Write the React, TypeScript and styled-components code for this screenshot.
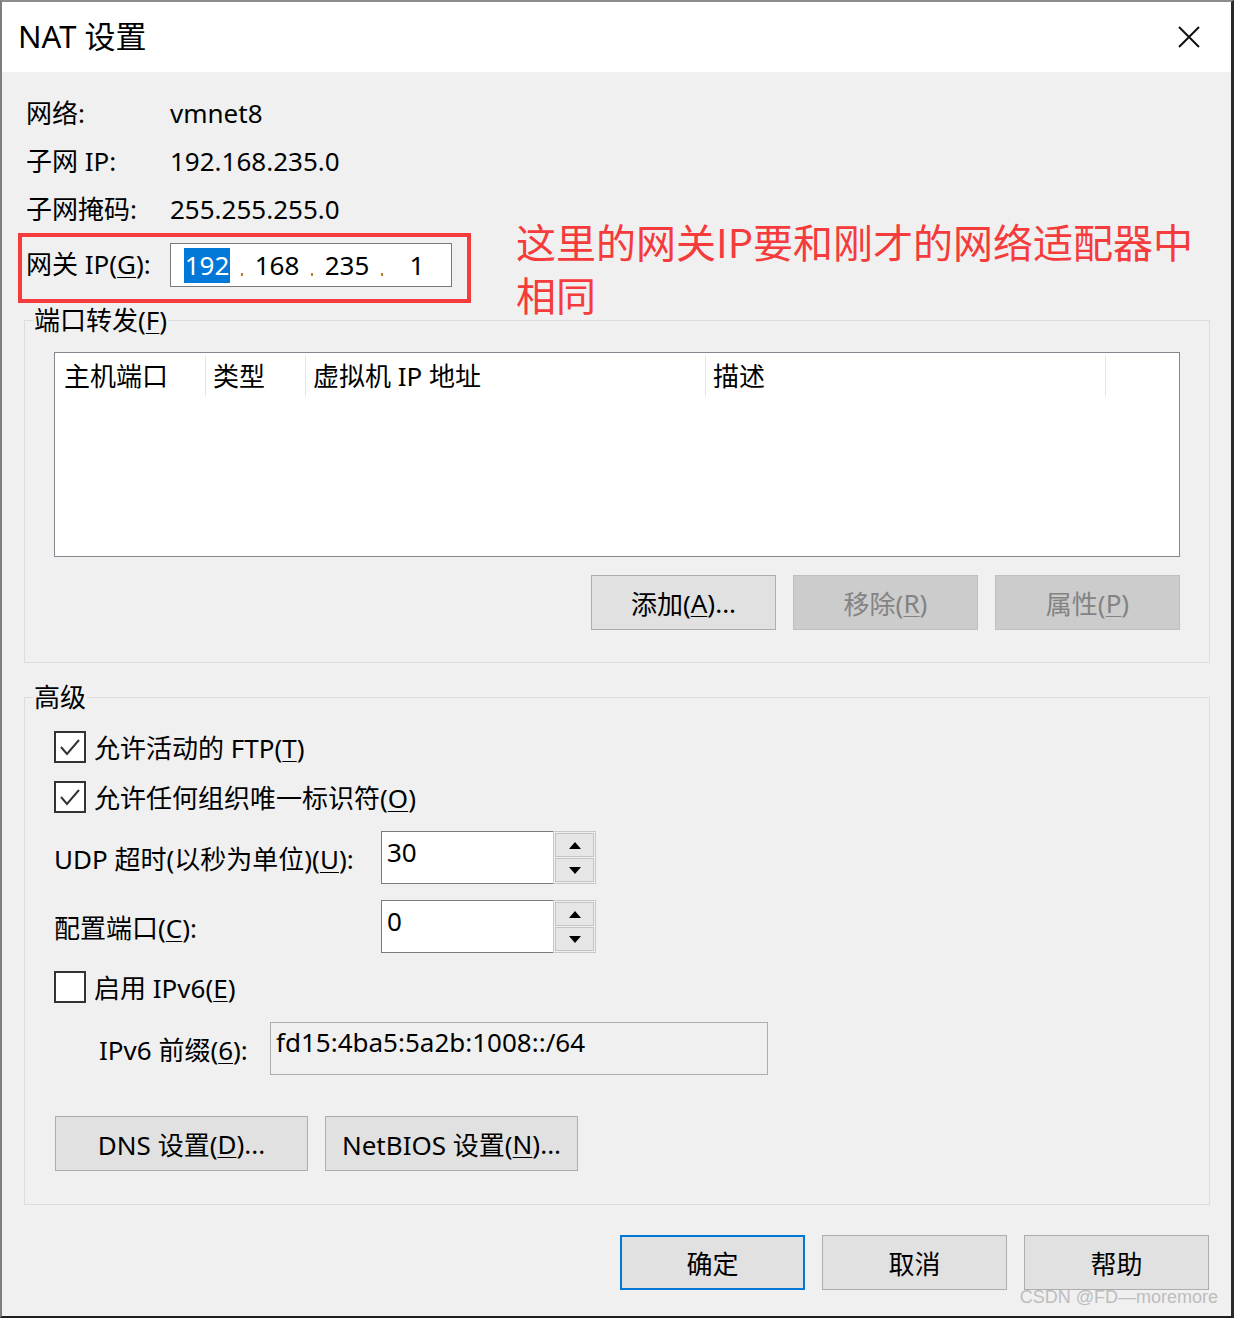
import React from 'react'
import styled, { createGlobalStyle } from 'styled-components'

const GlobalStyle = createGlobalStyle`
  html, body {
    margin: 0;
    padding: 0;
    background: #f0f0f0;
  }
  body {
    font-family: "Noto Sans", "Noto Sans CJK SC", sans-serif;
    color: #000;
  }
  * {
    box-sizing: border-box;
  }
`

const Window = styled.div`
  position: relative;
  width: 1234px;
  height: 1318px;
  display: flex;
  flex-direction: column;
  background: #f0f0f0;
  border-top: 2px solid #8c8c8c;
  border-left: 2px solid #7d7d7d;
  border-right: 3px solid #2a2a2a;
  border-bottom: 2px solid #1e1e1e;
`

const TitleBar = styled.div`
  flex: none;
  height: 70px;
  background: #fff;
  display: flex;
  align-items: center;
  justify-content: space-between;
  padding: 0 31px 0 16px;
`

const Title = styled.div`
  font-size: 31px;
  line-height: 1;
  margin-top: -2px;
`

const Body = styled.div`
  flex: 1;
  display: flex;
  flex-direction: column;
  padding: 17px 21px 0 22px;
  font-size: 26px;
`

const InfoRow = styled.div`
  display: grid;
  grid-template-columns: 144px auto;
  align-items: center;
  height: 48px;
  padding-left: 2px;
  line-height: 48px;
`

const GatewayBox = styled.div`
  width: 453px;
  height: 70px;
  margin-left: -6px;
  border: 4px solid #f53b3b;
  display: flex;
  align-items: flex-start;
  padding: 6px 0 0 4px;
`

const GatewayLabel = styled.div`
  width: 144px;
  line-height: 42px;
`

const IpInput = styled.div`
  width: 282px;
  height: 44px;
  background: #fff;
  border: 1px solid #7a7a7a;
  display: flex;
  align-items: center;
  padding-left: 4px;
`

const Octet = styled.div`
  width: 64px;
  text-align: center;
  line-height: 35px;
`

const Selected = styled.span`
  background: #0078d7;
  color: #fff;
  padding: 0 1px;
  display: inline-block;
`

const IpDot = styled.div`
  width: 6px;
  height: 35px;
  display: flex;
  align-items: flex-end;
  justify-content: center;
  padding-bottom: 7px;
  &::before {
    content: '';
    width: 2px;
    height: 3px;
    background: #c07a2a;
  }
`

const Annotation = styled.div`
  position: absolute;
  left: 514px;
  top: 213px;
  color: #f53b3b;
  font-family: "Noto Sans CJK SC", sans-serif;
  font-size: 40px;
  line-height: 53px;
  white-space: nowrap;
`

const GroupBox = styled.fieldset<{ $gap: number }>`
  margin: ${p => p.$gap}px 0 0 0;
  padding: 0;
  min-width: 0;
  border: 1px solid #dcdcdc;
`

const Legend = styled.legend`
  padding: 0 1px;
  margin-left: 8px;
  line-height: 30px;
`

const GroupInner = styled.div<{ $top: number; $bottom: number }>`
  padding: ${p => p.$top}px 29px ${p => p.$bottom}px 29px;
`

const ListView = styled.div`
  height: 205px;
  background: #fff;
  border: 1px solid #828790;
`

const ListHeader = styled.div`
  display: flex;
  align-items: flex-start;
  padding-top: 3px;
`

const HeaderCell = styled.div<{ $w: number; $pad: number }>`
  width: ${p => p.$w}px;
  padding-left: ${p => p.$pad}px;
  line-height: 40px;
  height: 40px;
  white-space: nowrap;
`

const HeaderSep = styled.div`
  width: 1px;
  height: 40px;
  background: #e5e5e5;
`

const ButtonRow = styled.div<{ $top: number; $end?: boolean }>`
  display: flex;
  gap: 17px;
  margin-top: ${p => p.$top}px;
  justify-content: ${p => (p.$end ? 'flex-end' : 'flex-start')};
`

const Button = styled.div<{ $w: number; $disabled?: boolean; $default?: boolean }>`
  width: ${p => p.$w}px;
  height: 55px;
  display: flex;
  align-items: center;
  justify-content: center;
  background: ${p => (p.$disabled ? '#cccccc' : '#e1e1e1')};
  color: ${p => (p.$disabled ? '#838383' : '#000')};
  border: ${p => (p.$default ? '2px solid #0078d7' : p.$disabled ? '1px solid #bfbfbf' : '1px solid #adadad')};
  white-space: nowrap;
`

const U = styled.span`
  text-decoration: underline;
  text-decoration-thickness: 1px;
  text-underline-offset: 3px;
`

const CheckRow = styled.div<{ $top: number }>`
  display: flex;
  align-items: center;
  gap: 8px;
  height: 32px;
  margin-top: ${p => p.$top}px;
`

const CheckBox = styled.div`
  width: 32px;
  height: 32px;
  background: #fff;
  border: 2px solid #333;
  display: flex;
  align-items: center;
  justify-content: center;
`

const SpinRow = styled.div<{ $top: number }>`
  display: grid;
  grid-template-columns: 327px auto;
  align-items: center;
  height: 53px;
  margin-top: ${p => p.$top}px;
`

const Spin = styled.div`
  display: flex;
  height: 53px;
`

const SpinField = styled.div`
  width: 172px;
  height: 53px;
  background: #fff;
  border: 1px solid #7a7a7a;
  border-right: none;
  padding-left: 5px;
  line-height: 40px;
`

const SpinButtons = styled.div`
  width: 43px;
  height: 53px;
  border: 1px solid #c8c8c8;
  padding: 1px;
  display: flex;
  flex-direction: column;
  gap: 1px;
`

const SpinButton = styled.div`
  flex: 1;
  background: #e6e6e6;
  border: 1px solid #c4c4c4;
  display: flex;
  align-items: center;
  justify-content: center;
`

const PrefixRow = styled.div`
  display: flex;
  align-items: center;
  margin-top: 19px;
  padding-left: 45px;
`

const PrefixLabel = styled.div`
  width: 171px;
  white-space: nowrap;
`

const PrefixField = styled.div`
  width: 498px;
  height: 53px;
  background: #f0f0f0;
  border: 1px solid #adadad;
  padding-left: 5px;
  line-height: 38px;
`

const DnsRow = styled(ButtonRow)`
  margin-left: 1px;
`

const FooterRow = styled(ButtonRow)`
  margin-right: 1px;
`

const Watermark = styled.div`
  position: absolute;
  right: 13px;
  bottom: 8px;
  font-family: "Liberation Sans", Arial, sans-serif;
  font-size: 18px;
  color: #bdbdbd;
  white-space: nowrap;
`

const CloseIcon = () => (
  <svg width="22" height="22" viewBox="0 0 22 22">
    <path d="M1 1 L21 21 M21 1 L1 21" stroke="#111" strokeWidth="2" fill="none" />
  </svg>
)

const Check = () => (
  <svg width="28" height="28" viewBox="0 0 28 28">
    <polyline points="5,14 11,21 23,7" stroke="#333" strokeWidth="2" fill="none" />
  </svg>
)

const Arrow = ({ up }: { up?: boolean }) => (
  <svg width="12" height="7" viewBox="0 0 12 7">
    <path d={up ? 'M0 7 L6 0 L12 7 Z' : 'M0 0 L12 0 L6 7 Z'} fill="#000" />
  </svg>
)

const SpinBox = ({ value }: { value: string }) => (
  <Spin>
    <SpinField>{value}</SpinField>
    <SpinButtons>
      <SpinButton><Arrow up /></SpinButton>
      <SpinButton><Arrow /></SpinButton>
    </SpinButtons>
  </Spin>
)

export default function App() {
  return <>
    <GlobalStyle />
    <Window>
      <TitleBar>
        <Title>NAT 设置</Title>
        <CloseIcon />
      </TitleBar>
      <Body>
        <InfoRow><span>网络:</span><span>vmnet8</span></InfoRow>
        <InfoRow><span>子网 IP:</span><span>192.168.235.0</span></InfoRow>
        <InfoRow><span>子网掩码:</span><span>255.255.255.0</span></InfoRow>
        <GatewayBox>
          <GatewayLabel>网关 IP(<U>G</U>):</GatewayLabel>
          <IpInput>
            <Octet><Selected>192</Selected></Octet>
            <IpDot />
            <Octet>168</Octet>
            <IpDot />
            <Octet>235</Octet>
            <IpDot />
            <Octet>1</Octet>
          </IpInput>
        </GatewayBox>

        <GroupBox $gap={2}>
          <Legend>端口转发(<U>F</U>)</Legend>
          <GroupInner $top={17} $bottom={32}>
            <ListView>
              <ListHeader>
                <HeaderCell $w={150} $pad={9}>主机端口</HeaderCell>
                <HeaderSep />
                <HeaderCell $w={99} $pad={7}>类型</HeaderCell>
                <HeaderSep />
                <HeaderCell $w={399} $pad={7}>虚拟机 IP 地址</HeaderCell>
                <HeaderSep />
                <HeaderCell $w={399} $pad={7}>描述</HeaderCell>
                <HeaderSep />
              </ListHeader>
            </ListView>
            <ButtonRow $top={18} $end>
              <Button $w={185}>添加(<U>A</U>)...</Button>
              <Button $w={185} $disabled>移除(<U>R</U>)</Button>
              <Button $w={185} $disabled>属性(<U>P</U>)</Button>
            </ButtonRow>
          </GroupInner>
        </GroupBox>

        <GroupBox $gap={19}>
          <Legend>高级</Legend>
          <GroupInner $top={19} $bottom={33}>
            <CheckRow $top={0}>
              <CheckBox><Check /></CheckBox>
              <span>允许活动的 FTP(<U>T</U>)</span>
            </CheckRow>
            <CheckRow $top={18}>
              <CheckBox><Check /></CheckBox>
              <span>允许任何组织唯一标识符(<U>O</U>)</span>
            </CheckRow>
            <SpinRow $top={18}>
              <span>UDP 超时(以秒为单位)(<U>U</U>):</span>
              <SpinBox value="30" />
            </SpinRow>
            <SpinRow $top={16}>
              <span>配置端口(<U>C</U>):</span>
              <SpinBox value="0" />
            </SpinRow>
            <CheckRow $top={18}>
              <CheckBox />
              <span>启用 IPv6(<U>E</U>)</span>
            </CheckRow>
            <PrefixRow>
              <PrefixLabel>IPv6 前缀(<U>6</U>):</PrefixLabel>
              <PrefixField>fd15:4ba5:5a2b:1008::/64</PrefixField>
            </PrefixRow>
            <DnsRow $top={41}>
              <Button $w={253}>DNS 设置(<U>D</U>)...</Button>
              <Button $w={253}>NetBIOS 设置(<U>N</U>)...</Button>
            </DnsRow>
          </GroupInner>
        </GroupBox>

        <FooterRow $top={30} $end>
          <Button $w={185} $default>确定</Button>
          <Button $w={185}>取消</Button>
          <Button $w={185}>帮助</Button>
        </FooterRow>
      </Body>
      <Annotation>
        <div>这里的网关IP要和刚才的网络适配器中</div>
        <div>相同</div>
      </Annotation>
      <Watermark>CSDN @FD—moremore</Watermark>
    </Window>
  </>
}
